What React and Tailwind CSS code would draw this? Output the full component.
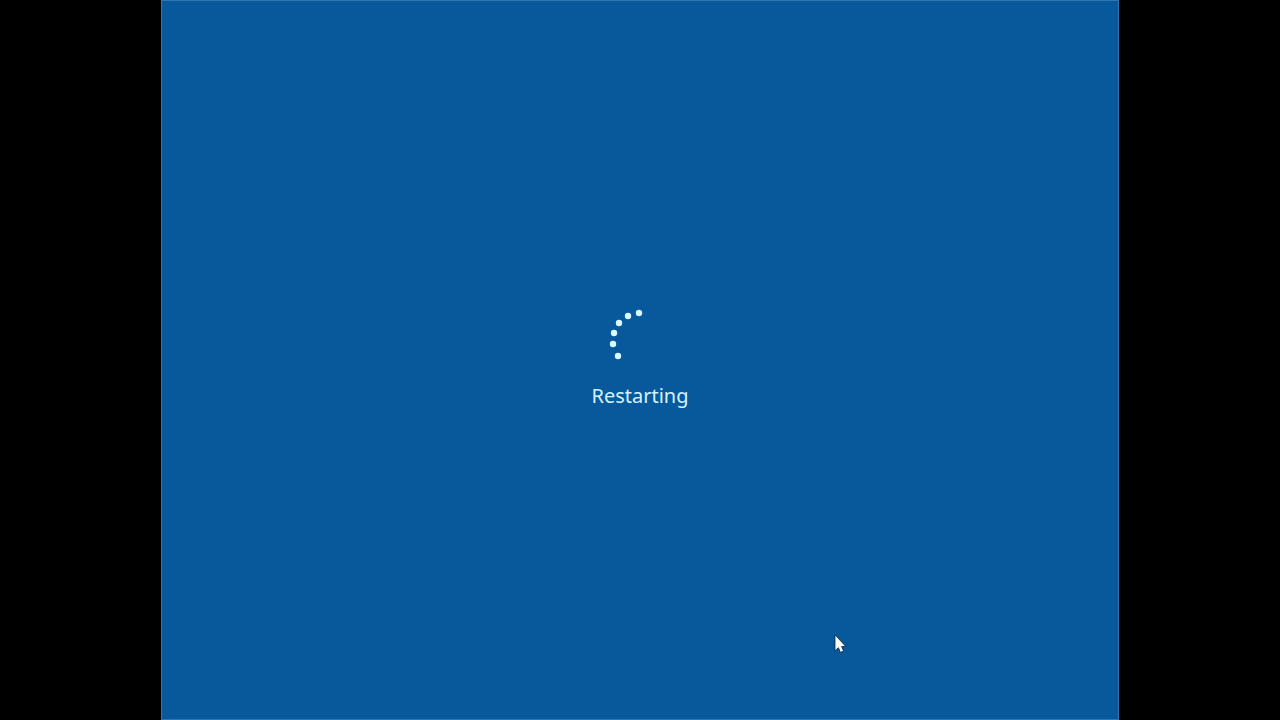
const dots = [
  { x: 31, y: 5 },
  { x: 20, y: 8 },
  { x: 11, y: 15 },
  { x: 6, y: 25 },
  { x: 5, y: 36 },
  { x: 10, y: 48 },
];

const Spinner = () => {
  return (
    <svg className="w-16 h-16" viewBox="0 0 64 64" aria-hidden="true">
      {dots.map((dot) => (
        <circle key={dot.y} cx={dot.x} cy={dot.y} r="3.2" fill="#d9fbff" />
      ))}
    </svg>
  );
};

const Cursor = () => {
  return (
    <svg
      className="absolute left-[672px] top-[632px] w-3 h-5"
      viewBox="0 0 12 20"
      aria-hidden="true"
    >
      <path
        d="M1 1.8V17.8l3.4-3.1 2 4.7 3.2-1.3-2-4.6h4.2z"
        fill="#ffffff"
        stroke="#06213b"
        strokeWidth="0.8"
      />
    </svg>
  );
};

const App = () => {
  return (
    <div className="min-h-screen bg-black flex justify-center">
      <main className="relative w-full max-w-[958px] bg-[#07599b] border border-[#2f76b0] flex flex-col items-center justify-center">
        <div role="status" className="flex flex-col items-center gap-2">
          <Spinner />
          <p className="font-['Noto_Sans',sans-serif] text-[20px] leading-8 text-[#d3f3ff]">
            Restarting
          </p>
        </div>
        <Cursor />
      </main>
    </div>
  );
};

export default App;
